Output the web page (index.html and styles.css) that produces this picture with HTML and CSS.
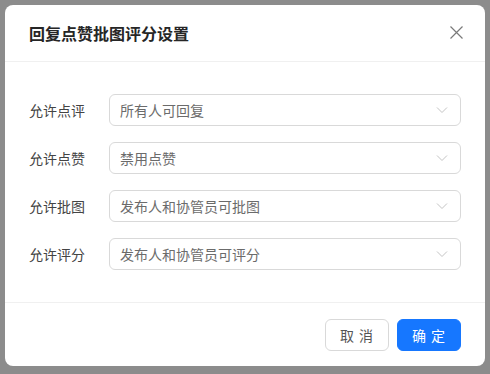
FILE: index.html
```html
<!DOCTYPE html>
<html lang="zh-CN">
<head>
  <meta charset="UTF-8">
  <meta name="viewport" content="width=device-width, initial-scale=1.0">
  <title>回复点赞批图评分设置</title>
  <link rel="stylesheet" href="styles.css">
</head>
<body>
  <div class="modal" role="dialog" aria-labelledby="modal-title">
    <div class="modal-header">
      <h2 id="modal-title" class="modal-title">回复点赞批图评分设置</h2>
      <button class="modal-close" aria-label="关闭">
        <svg width="13" height="13" viewBox="0 0 13 13"><path d="M0.5 0.5L12.5 12.5M12.5 0.5L0.5 12.5" stroke="#7a7a7a" stroke-width="1.2" fill="none"/></svg>
      </button>
    </div>
    <div class="modal-body">
      <div class="form-row">
        <label class="form-label">允许点评</label>
        <div class="select">
          <span class="select-value">所有人可回复</span>
          <svg class="select-arrow" width="12" height="8" viewBox="0 0 12 8"><path d="M1 1.5L6 6.5L11 1.5" stroke="#c4c4c4" stroke-width="1" fill="none"/></svg>
        </div>
      </div>
      <div class="form-row">
        <label class="form-label">允许点赞</label>
        <div class="select">
          <span class="select-value">禁用点赞</span>
          <svg class="select-arrow" width="12" height="8" viewBox="0 0 12 8"><path d="M1 1.5L6 6.5L11 1.5" stroke="#c4c4c4" stroke-width="1" fill="none"/></svg>
        </div>
      </div>
      <div class="form-row">
        <label class="form-label">允许批图</label>
        <div class="select">
          <span class="select-value">发布人和协管员可批图</span>
          <svg class="select-arrow" width="12" height="8" viewBox="0 0 12 8"><path d="M1 1.5L6 6.5L11 1.5" stroke="#c4c4c4" stroke-width="1" fill="none"/></svg>
        </div>
      </div>
      <div class="form-row">
        <label class="form-label">允许评分</label>
        <div class="select">
          <span class="select-value">发布人和协管员可评分</span>
          <svg class="select-arrow" width="12" height="8" viewBox="0 0 12 8"><path d="M1 1.5L6 6.5L11 1.5" stroke="#c4c4c4" stroke-width="1" fill="none"/></svg>
        </div>
      </div>
    </div>
    <div class="modal-footer">
      <button class="btn btn-default">取 消</button>
      <button class="btn btn-primary">确 定</button>
    </div>
  </div>
</body>
</html>
```

FILE: styles.css
```css
body {
  margin: 0;
  height: 374px;
  overflow: hidden;
  background: #8c8c8c;
  font-family: "Noto Sans CJK SC", "Noto Sans", sans-serif;
}
.modal {
  width: 480px;
  height: 361px;
  margin: 5px 0 0 5px;
  background: #fff;
  border-radius: 8px;
  display: flex;
  flex-direction: column;
}
.modal-header {
  height: 56px;
  padding: 0 22px 0 24px;
  display: flex;
  align-items: center;
  justify-content: space-between;
  border-bottom: 1px solid #f0f0f0;
}
.modal-title {
  margin: 0;
  font-size: 16px;
  font-weight: 600;
  color: #262626;
}
.modal-close {
  border: none;
  background: none;
  padding: 0;
  width: 13px;
  height: 13px;
  display: flex;
  margin-bottom: 1px;
}
.modal-body {
  flex: 1;
  padding: 32px 24px 0 24px;
  display: flex;
  flex-direction: column;
  gap: 16px;
}
.form-row {
  display: flex;
  align-items: center;
  height: 32px;
}
.form-label {
  width: 80px;
  flex-shrink: 0;
  font-size: 14px;
  color: #444;
}
.select {
  flex: 1;
  height: 32px;
  box-sizing: border-box;
  border: 1px solid #d9d9d9;
  border-radius: 6px;
  padding: 0 11px 0 10px;
  display: flex;
  align-items: center;
  justify-content: space-between;
}
.select-value {
  font-size: 14px;
  color: #6b6b6b;
}
.select-arrow { margin-right: 1px; }
.modal-footer {
  border-top: 1px solid #f0f0f0;
  padding: 16px 24px 15px;
  display: flex;
  justify-content: flex-end;
  gap: 8px;
}
.btn {
  width: 64px;
  height: 32px;
  border-radius: 6px;
  font-family: inherit;
  font-size: 14px;
  letter-spacing: 1px;
  padding: 0;
  cursor: pointer;
}
.btn-default { background: #fff; border: 1px solid #d9d9d9; color: #555; }
.btn-primary { background: #1677ff; border: 1px solid #1677ff; color: #fff; }
```
